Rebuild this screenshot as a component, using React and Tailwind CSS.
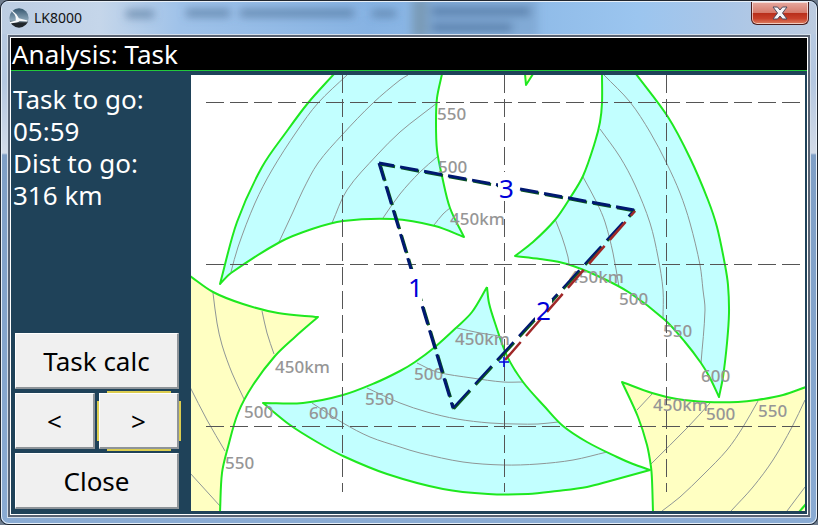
import React from 'react';

const FONT = 'font-["Noto_Sans","Open_Sans",sans-serif]';

// Turns 'x,y x,y ...' into a smooth path; sharp turns stay sharp.
const smooth = (points) => {
  const p = points.split(' ').map((pair) => pair.split(',').map(Number));
  const isCorner = (i) => {
    if (i <= 0 || i >= p.length - 1) return true;
    const a = Math.atan2(p[i][1] - p[i - 1][1], p[i][0] - p[i - 1][0]);
    const b = Math.atan2(p[i + 1][1] - p[i][1], p[i + 1][0] - p[i][0]);
    const turn = Math.abs(a - b);
    return Math.min(turn, 2 * Math.PI - turn) > 1;
  };
  let d = `M${p[0][0]} ${p[0][1]}`;
  for (let i = 0; i < p.length - 1; i++) {
    const from = p[i];
    const to = p[i + 1];
    const before = isCorner(i) ? from : p[i - 1];
    const after = isCorner(i + 1) ? to : p[i + 2];
    const len = Math.hypot(to[0] - from[0], to[1] - from[1]);
    const handle = (u, v) => {
      const l = Math.hypot(v[0] - u[0], v[1] - u[1]) || 1;
      return [((v[0] - u[0]) / l) * len * 0.33, ((v[1] - u[1]) / l) * len * 0.33];
    };
    const h1 = handle(before, to);
    const h2 = handle(from, after);
    d += `C${from[0] + h1[0]} ${from[1] + h1[1]} ${to[0] - h2[0]} ${to[1] - h2[1]} ${to[0]} ${to[1]}`;
  }
  return d;
};

// airspace / reach sectors, in map units
const SECTORS = [
  {
    fill: '#c2ffff',
    points: '334,74 308,103 287,131 262,167 237,222 220,284 231,273 280,242 312,229 343,221 393,219 435,226 464,237 450,208 442,176 437,150 436,122 437,98 442,74',
  },
  {
    fill: '#c2ffff',
    points: '602,74 602,103 600,122 595,142 583,176 570,198 555,220 533,242 515,256 540,259 567,264 600,277 630,293 665,320 685,342 701,363 710,378 719,397 723,377 727,343 729,313 728,285 725,265 717,227 708,200 690,158 668,117 636,74',
  },
  {
    fill: '#c2ffff',
    points: '487,287 472,312 457,327 435,347 415,362 400,371 375,383 343,395 303,403 263,403 290,425 317,442 343,456 387,474 443,489 488,494 528,494 557,491 587,487 610,481 650,470 633,464 617,457 587,442 563,426 545,407 523,382 507,356 495,323 489,303 487,287',
  },
  {
    fill: '#ffffc2',
    points: '190,276 213,292 243,304 278,313 318,317 295,337 275,356 253,385 238,413 228,447 222,473 220,512 190,512',
  },
  {
    fill: '#ffffc2',
    points: '806,387 783,395 757,400 738,402 707,402 677,399 652,393 622,382 638,417 647,445 651,467 652,480 653,512 806,512',
  },
  { fill: '#ffffc2', points: '525,74 526,85 533,74' },
  { fill: 'none', points: '799,512 806,504' },
];

const CONTOURS = [
  '347,75 318,103 297,131 272,170 255,203 238,247 231,272',
  '408,75 400,80 373,103 342,135 318,163 303,190 293,212 279,242',
  '437,103 420,116 400,132 377,155 347,190 332,223',
  '437,157 420,172 400,194 383,218',
  '450,208 443,214 434,225',
  '604,75 630,102 650,132 667,164 680,193 690,223 700,265 703,290 705,310 701,363',
  '600,129 620,157 635,185 650,223 658,257 663,290 663,319',
  '583,177 597,203 605,222 613,253 619,287',
  '555,219 562,237 568,257 569,265',
  '457,328 480,333 500,336',
  '417,363 437,372 472,378 503,382 523,382',
  '367,388 400,403 427,412 457,419 490,423 517,424 538,424 558,422',
  '312,403 343,423 370,437 400,447 420,453 463,462 503,465 538,464 573,460 607,452',
  '213,293 217,323 222,345 232,373 244,399',
  '262,311 267,333 274,354',
  '190,387 207,420 225,451',
  '190,473 220,506',
  '652,394 637,410',
  '710,403 688,427 651,464',
  '758,401 743,427 727,450 703,475 680,497 662,511',
  '805,400 792,427 773,460 753,487 731,511',
  '805,487 787,511',
];

const DISTANCES = [
  [437, 120, '550'],
  [438, 173, '500'],
  [450, 225, '450km'],
  [569, 283, '450km'],
  [619, 305, '500'],
  [663, 337, '550'],
  [701, 382, '600'],
  [653, 411, '450km'],
  [706, 420, '500'],
  [758, 417, '550'],
  [275, 373, '450km'],
  [244, 418, '500'],
  [309, 419, '600'],
  [365, 405, '550'],
  [225, 469, '550'],
  [455, 345, '450km'],
  [414, 380, '500'],
];

const LEGS = [
  { d: 'M379 163L453 408', dash: '18.8 6.3', offset: 1, width: 3 },
  { d: 'M453 408L634 210', dash: '24.4 8.1', offset: 0, width: 2 },
  { d: 'M634 210L379 163', dash: '18.3 6.1', offset: 0, width: 3 },
];

const TaskMap = () => (
  <svg viewBox="191 75 614 436" className="block w-full bg-white" role="img" aria-label="Task">
    {SECTORS.map((s) => (
      <path key={s.points} d={smooth(s.points)} fill={s.fill} />
    ))}
    <g fill="none" stroke="#8f9696" strokeWidth="1">
      {CONTOURS.map((points) => (
        <path key={points} d={smooth(points)} />
      ))}
    </g>
    <g fill="none" stroke="#1fe81f" strokeWidth="2" strokeLinejoin="round">
      {SECTORS.map((s) => (
        <path key={s.points} d={smooth(s.points)} />
      ))}
    </g>

    {/* distance labels */}
    <g className="text-[17px] font-medium" fill="#969696">
      {DISTANCES.map(([x, y, label]) => (
        <text key={`${x}-${y}`} x={x} y={y}>{label}</text>
      ))}
    </g>

    {/* grid */}
    <g fill="none" stroke="#555" strokeWidth="1" strokeDasharray="18 6">
      <path d="M206 102.5H800M206 264.5H800M206 426.5H800" />
      <path d="M342.5 75V492M504.5 75V492M666.5 75V492" />
    </g>

    {/* task legs */}
    <g fill="none">
      {LEGS.map((leg) => (
        <g key={leg.d} strokeWidth={leg.width} strokeDasharray={leg.dash} strokeDashoffset={leg.offset}>
          <path d={leg.d} stroke="#0b5a1c" transform="translate(1 1)" />
          <path d={leg.d} stroke="#001870" />
        </g>
      ))}
    </g>
    <path d="M408 269H422V305H408ZM498 172H519V201H498ZM535 299H552V321H535Z" fill="#fff" />
    <g fill="none">
      <path d="M505 360L635 211" stroke="#a02828" strokeWidth="2.5" strokeDasharray="23.9 8" />
      <path d="M499 362H509M504 357V367" stroke="#0000e0" strokeWidth="1.6" />
    </g>
    <g className="text-[26px]" fill="#0000d8">
      <text x="408" y="297">1</text>
      <text x="536" y="320">2</text>
      <text x="499" y="198">3</text>
    </g>
  </svg>
);

const PanelButton = ({ children, className = '' }) => (
  <button
    type="button"
    className={`h-14 w-full border-t border-l border-r-2 border-b-2 border-t-white border-l-white border-r-[#8e9499] border-b-[#8e9499] bg-[#f0f0f0] text-[26px] leading-8 text-black ${className}`}
  >
    {children}
  </button>
);

const AppIcon = () => (
  <svg viewBox="0 0 20 20" className="h-5 w-5 shrink-0" aria-hidden="true">
    <defs>
      <linearGradient id="sky" x1="0" y1="0" x2="0" y2="1">
        <stop offset="0" stopColor="#35566f" />
        <stop offset="0.6" stopColor="#8aa5b8" />
        <stop offset="0.68" stopColor="#6d7f8b" />
        <stop offset="0.76" stopColor="#20262b" />
      </linearGradient>
    </defs>
    <circle cx="10" cy="10" r="9.7" fill="url(#sky)" />
    <path d="M0.8 1.2Q4.5 3.4 7.6 6.4L9.9 10.3L18.6 12.6L18.2 13.4L10.6 12.9Q9.6 14.2 7.4 14.4L1.2 15.4L0.8 14.2L6.8 12.4Q7.4 9.4 5.6 6.6Z" fill="#f5f8fa" />
  </svg>
);

// smudges of the window behind showing through the glass
const Glass = () => (
  <svg className="pointer-events-none absolute inset-0 h-full w-full" preserveAspectRatio="xMinYMin slice" viewBox="0 0 814 32" aria-hidden="true">
    <defs>
      <filter id="soft" x="-20%" y="-60%" width="140%" height="220%">
        <feGaussianBlur stdDeviation="4" />
      </filter>
    </defs>
    <g filter="url(#soft)">
      <path d="M124 8H152V16H124ZM184 7H228V15H184ZM238 7H352V15H238ZM370 8H394V15H370Z" fill="#47698f" opacity="0.6" />
      <path d="M410 -4H426V36H410Z" fill="#7695ad" opacity="0.8" />
      <path d="M426 -4H536V36H426Z" fill="#7499c4" opacity="0.5" />
      <path d="M430 6H528V13H430ZM430 22H510V29H430Z" fill="#365a85" opacity="0.6" />
    </g>
  </svg>
);

const TitleBar = () => (
  <div className="relative flex h-8 items-start rounded-t-md bg-[linear-gradient(90deg,#bccde2_0%,#c5d6ea_12%,#9fc2e9_22%,#87b3e3_45%,#8fbbe8_65%,#9bc5ef_78%,#a9c6e8_88%,#bccbdf_100%)]">
    <Glass />
    <div className="relative flex items-center gap-[5px] pt-1 pl-[7px]">
      <AppIcon />
      <h1 className="text-sm leading-6 text-[#111]">LK8000</h1>
    </div>
    <button
      type="button"
      aria-label="Close window"
      className="relative mr-[7px] ml-auto flex h-[23px] w-[58px] items-center justify-center rounded-b-md border border-t-0 border-[#4b1d1d] bg-[linear-gradient(180deg,#e6aaa0_0%,#d67b6c_48%,#b92f1b_52%,#c8402a_75%,#dd8063_100%)] ring-1 ring-white/60 ring-inset"
    >
      <svg viewBox="0 0 16 14" className="h-[14px] w-4" aria-hidden="true">
        <path d="M1 1H5.5L8 4L10.5 1H15L10.5 7L15 13H10.5L8 10L5.5 13H1L5.5 7Z" fill="#f4f4f6" stroke="#4e4a5c" strokeWidth="1" />
      </svg>
    </button>
  </div>
);

const Sidebar = () => (
  <aside className="flex w-[180px] shrink-0 flex-col justify-between pt-2">
    <dl className="pl-0.5 text-[26px] leading-8 text-white">
      <dt>Task to go:</dt>
      <dd>05:59</dd>
      <dt>Dist to go:</dt>
      <dd>316 km</dd>
    </dl>
    <div className="grid grid-cols-2 gap-1 pr-3 pb-0.5 pl-1">
      <div className="col-span-2">
        <PanelButton>Task calc</PanelButton>
      </div>
      <PanelButton>&lt;</PanelButton>
      <div className="relative">
        {/* focus markers */}
        <span className="absolute inset-x-2 -inset-y-0.5 bg-[#dccd50]" />
        <span className="absolute -inset-x-0.5 inset-y-2 bg-[#dccd50]" />
        <PanelButton className="relative">&gt;</PanelButton>
      </div>
      <div className="col-span-2">
        <PanelButton>Close</PanelButton>
      </div>
    </div>
  </aside>
);

const App = () => (
  <div className={`min-h-screen bg-[#6f7d8e] ${FONT}`}>
    <div className="rounded-lg border border-[#20262f] bg-[#86a4c9]">
      <div className="rounded-lg border border-[#e8f0f8] bg-[linear-gradient(180deg,#b9cbe2_0px,#b4c7e0_80px,#d3dbe8_151px,#7f9fc6_153px,#8aabd3_100%)] pb-[5px]">
        <TitleBar />
        <div className="mx-[5px] border border-[#d3deeb]">
          <div className="border-2 border-[#596373]">
            <div className="border border-white bg-[#1f4259]">
              <h2 className="border-b border-[#22c83c] bg-black pl-px text-[26px] leading-8 text-white">Analysis: Task</h2>
              <main className="flex pt-1 pr-0.5 pb-[3px]">
                <Sidebar />
                <div className="min-w-0 flex-1">
                  <TaskMap />
                </div>
              </main>
            </div>
          </div>
        </div>
      </div>
    </div>
  </div>
);

export default App;
